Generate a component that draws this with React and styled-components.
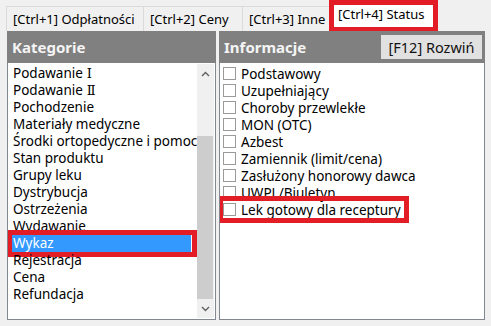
import React from "react";
import styled, { createGlobalStyle } from "styled-components";

const GlobalStyle = createGlobalStyle`
  html, body {
    margin: 0;
    padding: 0;
    background: #f0f0f0;
  }
  body {
    font-family: "Noto Sans", "DejaVu Sans", sans-serif;
    color: #000;
  }
`;

const categories = [
  { name: "Podawanie", numeral: "Ⅰ" },
  { name: "Podawanie", numeral: "Ⅱ" },
  { name: "Pochodzenie" },
  { name: "Materiały medyczne" },
  { name: "Środki ortopedyczne i pomocnicze" },
  { name: "Stan produktu" },
  { name: "Grupy leku" },
  { name: "Dystrybucja" },
  { name: "Ostrzeżenia" },
  { name: "Wydawanie" },
  { name: "Wykaz", selected: true },
  { name: "Rejestracja" },
  { name: "Cena" },
  { name: "Refundacja" },
];

const infos = [
  "Podstawowy",
  "Uzupełniający",
  "Choroby przewlekłe",
  "MON (OTC)",
  "Azbest",
  "Zamiennik (limit/cena)",
  "Zasłużony honorowy dawca",
  "UWPL/Biuletyn",
  "Lek gotowy dla receptury",
];

const tabs = [
  { label: "[Ctrl+1] Odpłatności", width: 137 },
  { label: "[Ctrl+2] Ceny", width: 99 },
  { label: "[Ctrl+3] Inne", width: 87 },
  { label: "[Ctrl+4] Status", width: 109, active: true },
];

const Screen = styled.div`
  width: 491px;
  height: 326px;
  box-sizing: border-box;
  padding: 0 6px 0 7px;
  display: flex;
  flex-direction: column;
  overflow: hidden;
`;

const TabBar = styled.div`
  height: 31px;
  display: flex;
  align-items: flex-end;
  margin-left: -1px;
`;

const Tab = styled.div`
  box-sizing: border-box;
  width: ${(p) => p.width}px;
  height: 25px;
  display: flex;
  align-items: center;
  white-space: nowrap;
  font-size: 13px;
  padding: 0 0 1px 6px;
  background: #f0f0f0;
  border-left: 1px solid #dadada;
  border-top: 1px solid #dadada;
`;

const ActiveTab = styled(Tab)`
  height: 31px;
  padding: 0 0 5px 4px;
  background: #fff;
  border: 5px solid #e31d25;
  border-bottom-width: 4px;
`;

const Panels = styled.div`
  display: flex;
  gap: 3px;
  height: 289px;
`;

const Panel = styled.div`
  width: ${(p) => p.width}px;
  display: flex;
  flex-direction: column;
`;

const Header = styled.div`
  height: 32px;
  flex-shrink: 0;
  background: #808080;
  display: flex;
  align-items: center;
  justify-content: space-between;
  padding: 0 3px 0 5px;
`;

const Title = styled.span`
  font-weight: 700;
  font-size: 15px;
  color: #f4f4f4;
`;

const HeaderButton = styled.button`
  width: 101px;
  height: 24px;
  border: none;
  background: #e1e1e1;
  font-family: "Noto Sans", sans-serif;
  font-size: 14.5px;
  color: #111;
  padding: 0;
`;

const ListBox = styled.div`
  flex: 1;
  display: flex;
  background: #fff;
  border: 1px solid #828790;
  border-top: none;
  min-height: 0;
`;

const Items = styled.div`
  flex: 1;
  min-width: 0;
  padding: ${(p) => (p.checks ? "2px 0 0 3px" : "2px 6px 0 4px")};
  overflow: hidden;
  display: flex;
  flex-direction: column;
  align-items: flex-start;
`;

const Item = styled.div`
  position: relative;
  height: 17px;
  line-height: 17px;
  font-size: 13.5px;
  white-space: nowrap;
  padding-left: 1px;
  align-self: stretch;
  background: ${(p) => (p.selected ? "#3399ff" : "transparent")};
  color: ${(p) => (p.selected ? "#fff" : "#000")};
`;

const Numeral = styled.span`
  font-family: "DejaVu Serif", "Liberation Serif", serif;
  font-size: 13px;
  margin-left: 4px;
`;

const CheckRow = styled.label`
  position: relative;
  display: flex;
  align-items: center;
  gap: 5px;
  height: 17px;
  font-size: 13.5px;
  white-space: nowrap;
  padding-right: ${(p) => (p.marked ? "3px" : "0")};
`;

const Box = styled.span`
  width: 11px;
  height: 11px;
  border: 1px solid #9a9a9a;
  background: #fff;
  flex-shrink: 0;
`;

const Mark = styled.span`
  position: absolute;
  top: -5px;
  left: -5px;
  right: ${(p) => (p.wide ? -6 : -5)}px;
  bottom: -5px;
  border: 5px solid #e31d25;
  pointer-events: none;
`;

const ScrollBar = styled.div`
  width: 17px;
  flex-shrink: 0;
  background: #f0f0f0;
  display: flex;
  flex-direction: column;
  margin: 1px 1px 1px 0;
`;

const Arrow = styled.div`
  height: 19px;
  display: flex;
  align-items: center;
  justify-content: center;
  flex-shrink: 0;
`;

const Track = styled.div`
  flex: 1;
  display: flex;
  flex-direction: column;
  justify-content: flex-end;
`;

const Thumb = styled.div`
  height: ${(p) => p.size}px;
  margin-right: 1px;
  background: #cdcdcd;
`;

const Chevron = ({ up }) => (
  <svg width="9" height="6" viewBox="0 0 9 6">
    <path
      d={up ? "M1 5 L4.5 1.5 L8 5" : "M1 1 L4.5 4.5 L8 1"}
      fill="none"
      stroke="#606060"
      strokeWidth="1.4"
    />
  </svg>
);

export default function App() {
  return (
    <>
      <GlobalStyle />
      <Screen>
        <TabBar>
          {tabs.map((t) =>
            t.active ? (
              <ActiveTab key={t.label} width={t.width}>
                {t.label}
              </ActiveTab>
            ) : (
              <Tab key={t.label} width={t.width}>
                {t.label}
              </Tab>
            )
          )}
        </TabBar>
        <Panels>
          <Panel width={209}>
            <Header>
              <Title>Kategorie</Title>
            </Header>
            <ListBox>
              <Items>
                {categories.map((c, idx) => (
                  <Item key={idx} selected={c.selected}>
                    {c.name}
                    {c.numeral && <Numeral>{c.numeral}</Numeral>}
                    {c.selected && <Mark wide />}
                  </Item>
                ))}
              </Items>
              <ScrollBar>
                <Arrow>
                  <Chevron up />
                </Arrow>
                <Track>
                  <Thumb size={163} />
                </Track>
                <Arrow>
                  <Chevron />
                </Arrow>
              </ScrollBar>
            </ListBox>
          </Panel>
          <Panel width={266}>
            <Header>
              <Title>Informacje</Title>
              <HeaderButton>[F12] Rozwiń</HeaderButton>
            </Header>
            <ListBox>
              <Items checks>
                {infos.map((i) => {
                  const marked = i === "Lek gotowy dla receptury";
                  return (
                    <CheckRow key={i} marked={marked}>
                      <Box />
                      {i}
                      {marked && <Mark />}
                    </CheckRow>
                  );
                })}
              </Items>
            </ListBox>
          </Panel>
        </Panels>
      </Screen>
    </>
  );
}
